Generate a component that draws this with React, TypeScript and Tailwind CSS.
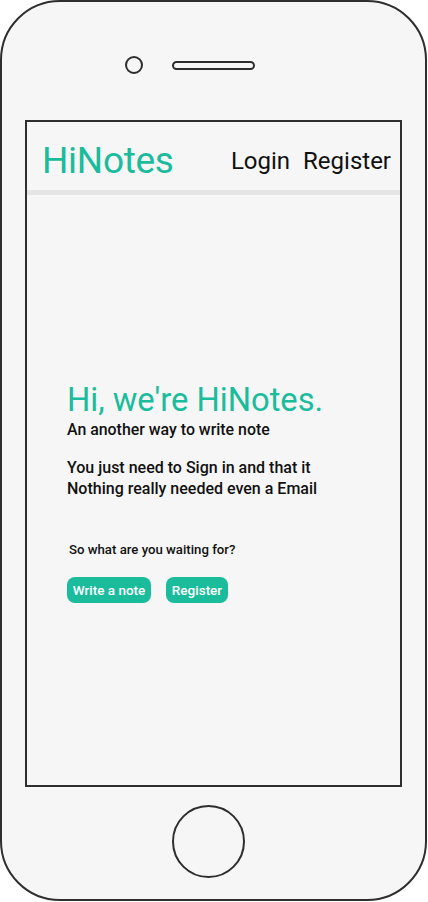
import * as React from "react";

const font = { fontFamily: "Roboto, 'Noto Sans', sans-serif" };

export default function App() {
  return (
    <div className="w-[428px] h-[902px] bg-white" style={font}>
      <div className="w-[427px] h-[901px] border-2 border-[#2e2e2e] rounded-[60px] bg-[#f6f6f6] flex flex-col">
        <div className="flex items-center pl-[123px] pt-[54px] gap-[29px]">
          <div className="size-[18px] rounded-full border-[2.5px] border-[#2e2e2e]" />
          <div className="w-[83px] h-[9px] rounded-full border-[2.5px] border-[#2e2e2e]" />
        </div>

        <div className="ml-[23px] mt-[46px] w-[377px] h-[667px] border-2 border-[#2e2e2e] flex flex-col">
          <div className="h-[68px] flex justify-between pl-[15px] pr-[9px]">
            <div className="mt-[20px] text-[37px] leading-none tracking-[-0.3px] text-[#1abc9c]">
              HiNotes
            </div>
            <div className="mt-[27px] flex gap-[13px] text-[24px] leading-none text-[#111]">
              <span>Login</span>
              <span>Register</span>
            </div>
          </div>
          <div className="h-[5px] bg-[#e5e5e5]" />

          <div className="pl-[40px] pt-[189px] flex flex-col">
            <h1 className="text-[32.7px] leading-none text-[#1abc9c]">Hi, we're HiNotes.</h1>
            <p className="mt-[5px] text-[15.9px] leading-none font-medium text-[#111]">An another way to write note</p>
            <p className="mt-[19px] text-[16px] leading-[21px] font-medium text-[#111]">
              You just need to Sign in and that it
              <br />
              Nothing really needed even a Email
            </p>
            <p className="mt-[44px] pl-[2px] text-[13.2px] leading-none font-medium text-[#111]">So what are you waiting for?</p>
            <div className="mt-[21px] flex gap-[15px]">
              <button className="h-[26px] w-[84px] rounded-[8px] bg-[#1abc9c] text-white text-[13.5px] font-medium">
                Write a note
              </button>
              <button className="h-[26px] w-[62px] rounded-[8px] bg-[#1abc9c] text-white text-[13.5px] font-medium">
                Register
              </button>
            </div>
          </div>
        </div>

        <div className="ml-[170px] mt-[18px] size-[73px] rounded-full border-2 border-[#2e2e2e]" />
      </div>
    </div>
  );
}
